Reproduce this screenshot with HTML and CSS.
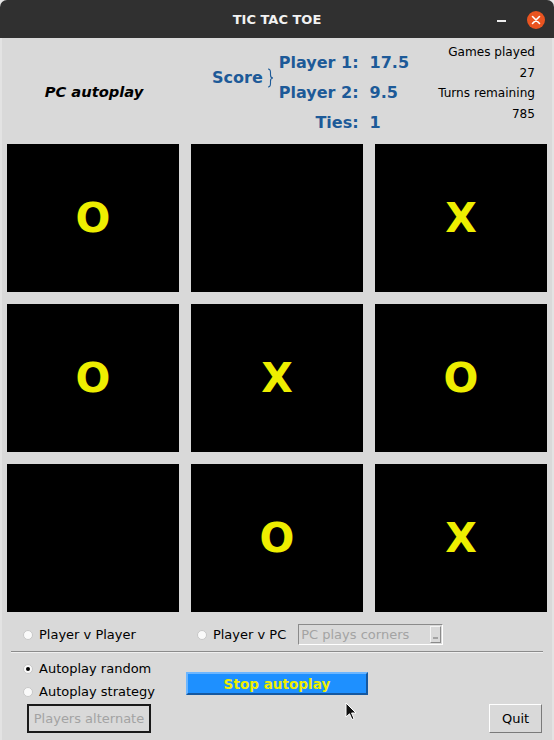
FILE: index.html
```html
<!DOCTYPE html>
<html>
<head>
<meta charset="utf-8">
<link rel="stylesheet" href="styles.css">
</head>
<body>
<div class="window">
  <div class="titlebar">
    <span class="title">TIC TAC TOE</span>
    <span class="min"></span>
    <span class="close"><svg width="18" height="18" viewBox="0 0 18 18"><circle cx="9" cy="9" r="9" fill="#e95420"/><path d="M5.5 5.5 L12.5 12.5 M12.5 5.5 L5.5 12.5" stroke="#fff" stroke-width="1.6" stroke-linecap="round"/></svg></span>
  </div>
  <div class="content">
    <div class="header">
      <div class="mode">PC autoplay</div>
      <div class="score">
        <div class="score-title">Score<svg class="brace" width="7" height="20" viewBox="0 0 7 20"><path d="M1 1 C3.5 1 3.5 2.5 3.5 4.5 L3.5 7 C3.5 8.7 4.5 10 6 10 C4.5 10 3.5 11.3 3.5 13 L3.5 15.5 C3.5 17.5 3.5 19 1 19" fill="none" stroke="#1d5a98" stroke-width="1.1"/></svg></div>
        <div class="score-grid">
          <span class="lbl">Player 1:</span><span class="val">17.5</span>
          <span class="lbl">Player 2:</span><span class="val">9.5</span>
          <span class="lbl">Ties:</span><span class="val">1</span>
        </div>
      </div>
      <div class="stats">
        <div>Games played</div>
        <div>27</div>
        <div>Turns remaining</div>
        <div>785</div>
      </div>
    </div>
    <div class="board">
      <div class="cell">O</div>
      <div class="cell"></div>
      <div class="cell">X</div>
      <div class="cell">O</div>
      <div class="cell">X</div>
      <div class="cell">O</div>
      <div class="cell"></div>
      <div class="cell">O</div>
      <div class="cell">X</div>
    </div>
    <div class="controls">
      <div class="row-top">
        <label class="radio first"><span class="dot"></span>Player v Player</label>
        <label class="radio second"><span class="dot"></span>Player v PC</label>
        <div class="combo"><span class="combo-text">PC plays corners</span><span class="combo-btn"><span class="arrow"></span></span></div>
      </div>
      <div class="sep"></div>
      <div class="row-bottom">
        <label class="radio first r1"><span class="dot checked"></span>Autoplay random</label>
        <label class="radio first r2"><span class="dot"></span>Autoplay strategy</label>
        <button class="stop">Stop autoplay</button>
        <button class="alternate">Players alternate</button>
        <button class="quit">Quit</button>
      </div>
    </div>
  </div>
  <svg class="cursor" width="12" height="19" viewBox="0 0 12 19"><path d="M1 1 L1 15 L4.5 11.8 L7 17.5 L9 16.6 L6.6 11 L11 11 Z" fill="#111" stroke="#fff" stroke-width="1"/></svg>
</div>
</body>
</html>
```

FILE: styles.css
```css
html, body {
  margin: 0;
  padding: 0;
  background: #e6e6e6;
}
body {
  width: 554px;
  height: 740px;
  overflow: hidden;
  font-family: "DejaVu Sans", sans-serif;
}
.window {
  position: relative;
  width: 554px;
  height: 740px;
}
.titlebar {
  height: 38px;
  background: #303030;
  border-radius: 7px 7px 0 0;
  display: flex;
  align-items: center;
  justify-content: center;
  position: relative;
}
.title {
  color: #f2f2f2;
  font-weight: bold;
  font-size: 13px;
}
.min {
  position: absolute;
  left: 497px;
  top: 20px;
  width: 9px;
  height: 1.5px;
  background: #eeeeee;
}
.close {
  position: absolute;
  left: 527px;
  top: 11px;
  width: 18px;
  height: 18px;
}
.close svg { display: block; }
.content {
  height: 702px;
  background: #d9d9d9;
  border-left: 2px solid #e3e3e3;
  border-right: 2px solid #e3e3e3;
  box-sizing: border-box;
}
.header {
  height: 106px;
  display: flex;
  align-items: flex-start;
}
.mode {
  width: 184px;
  align-self: center;
  text-align: center;
  font-weight: bold;
  font-style: italic;
  font-size: 14.7px;
  color: #000;
  padding-top: 1px;
}
.score {
  display: flex;
  align-items: center;
  margin-left: 26px;
  margin-top: 9px;
  color: #1d5a98;
  font-weight: bold;
  font-size: 16px;
}
.score-title {
  display: flex;
  align-items: center;
  height: 60px;
  align-self: flex-start;
}
.brace {
  margin-left: 4px;
  margin-right: 5px;
  margin-top: 1px;
}
.score-grid {
  display: grid;
  grid-template-columns: auto auto;
  grid-auto-rows: 30px;
  column-gap: 11px;
  align-items: center;
}
.lbl { text-align: right; }
.val { text-align: left; }
.stats {
  margin-left: auto;
  margin-right: 17px;
  margin-top: 4px;
  text-align: right;
  font-size: 12.1px;
  line-height: 20.5px;
  color: #000;
}
.board {
  display: grid;
  grid-template-columns: repeat(3, 172px);
  grid-template-rows: repeat(3, 148px);
  gap: 12px;
  padding-left: 5px;
}
.cell {
  background: #000;
  color: #eeee00;
  font-weight: bold;
  font-size: 41px;
  display: flex;
  align-items: center;
  justify-content: center;
}
.controls {
  padding: 12px 9px 0 9px;
  font-size: 13px;
  color: #000;
}
.row-top {
  height: 21px;
  display: flex;
  align-items: center;
}
.radio {
  display: flex;
  align-items: center;
  white-space: nowrap;
}
.dot {
  width: 8px;
  height: 8px;
  border-radius: 50%;
  background: #fafafa;
  border: 1px solid #c8c8c8;
  margin-right: 6px;
  position: relative;
  flex: none;
}
.dot.checked::after {
  content: "";
  position: absolute;
  left: 2px;
  top: 2px;
  width: 4px;
  height: 4px;
  border-radius: 50%;
  background: #000;
}
.radio.first { padding-left: 12px; }
.radio.second { margin-left: 61px; }
.combo {
  margin-left: 12px;
  width: 145px;
  height: 21px;
  box-sizing: border-box;
  border-top: 1px solid #8a8a8a;
  border-left: 1px solid #8a8a8a;
  border-bottom: 1px solid #ffffff;
  border-right: 1px solid #ffffff;
  display: flex;
  align-items: center;
  position: relative;
}
.combo-text {
  color: #a3a3a3;
  padding-left: 2px;
  flex: 1;
}
.combo-btn {
  width: 11px;
  height: 17px;
  margin-right: 1px;
  box-sizing: border-box;
  border-top: 1px solid #f4f4f4;
  border-left: 1px solid #f4f4f4;
  border-bottom: 1px solid #8a8a8a;
  border-right: 1px solid #8a8a8a;
  position: relative;
}
.arrow {
  position: absolute;
  left: 2px;
  bottom: 3px;
  width: 5px;
  height: 2px;
  background: #a3a3a3;
}
.sep {
  margin-top: 6px;
  height: 1px;
  background: #8c8c8c;
  border-bottom: 1px solid #f0f0f0;
}
.row-bottom {
  margin-top: 4px;
  display: grid;
  grid-template-columns: 175px 1fr auto;
  grid-template-rows: 23px 23px 29px;
}
.r1 { grid-column: 1; grid-row: 1; }
.r2 { grid-column: 1; grid-row: 2; }
.stop {
  grid-column: 2;
  grid-row: 1 / 3;
  align-self: start;
  justify-self: start;
  margin-top: 15px;
  width: 182px;
  height: 23px;
  background: #1e90ff;
  color: #eeee00;
  font-family: "DejaVu Sans", sans-serif;
  font-weight: bold;
  font-size: 13.6px;
  border-top: 2px solid #6cb6ff;
  border-left: 2px solid #6cb6ff;
  border-bottom: 2px solid #1558a0;
  border-right: 2px solid #1558a0;
  padding: 0;
}
.alternate {
  grid-column: 1;
  grid-row: 3;
  margin-top: 1px;
  margin-left: 16px;
  width: 124px;
  height: 29px;
  background: #d9d9d9;
  border: 2px solid #1a1a1a;
  color: #a3a3a3;
  font-family: "DejaVu Sans", sans-serif;
  font-size: 13px;
  padding: 0;
}
.quit {
  grid-column: 3;
  grid-row: 3;
  margin-top: 1px;
  margin-right: 1px;
  width: 53px;
  height: 29px;
  background: #d9d9d9;
  border-top: 1px solid #ffffff;
  border-left: 1px solid #ffffff;
  border-bottom: 1px solid #7a7a7a;
  border-right: 1px solid #7a7a7a;
  color: #000;
  font-family: "DejaVu Sans", sans-serif;
  font-size: 13px;
  padding: 0;
}
.cursor {
  position: absolute;
  left: 345px;
  top: 702px;
}
```
